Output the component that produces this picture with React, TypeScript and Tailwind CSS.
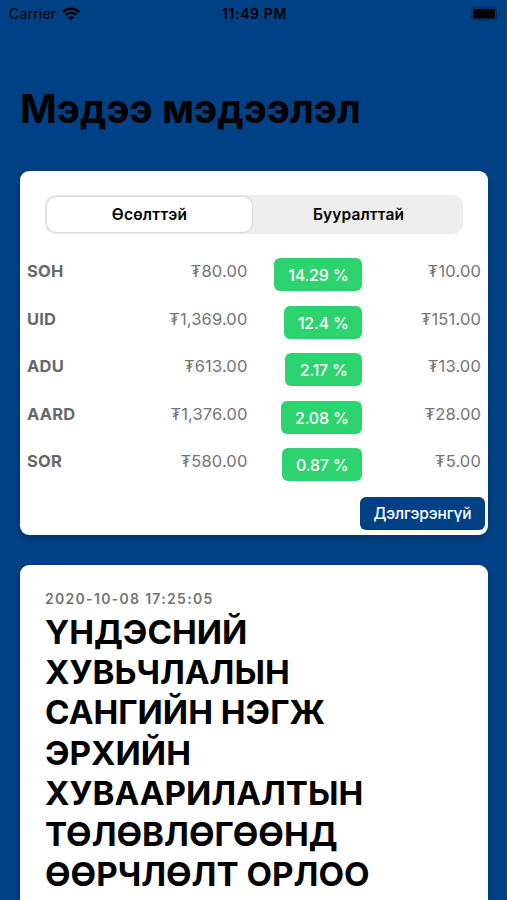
import React from 'react'

const stocks = [
  { symbol: 'SOH', price: '₮80.00', percent: '14.29 %', change: '₮10.00', width: 'w-[88px]' },
  { symbol: 'UID', price: '₮1,369.00', percent: '12.4 %', change: '₮151.00', width: 'w-[78px]' },
  { symbol: 'ADU', price: '₮613.00', percent: '2.17 %', change: '₮13.00', width: 'w-[77px]' },
  { symbol: 'AARD', price: '₮1,376.00', percent: '2.08 %', change: '₮28.00', width: 'w-[81px]' },
  { symbol: 'SOR', price: '₮580.00', percent: '0.87 %', change: '₮5.00', width: 'w-[80px]' },
]

const headline = [
  'ҮНДЭСНИЙ',
  'ХУВЬЧЛАЛЫН',
  'САНГИЙН НЭГЖ',
  'ЭРХИЙН',
  'ХУВААРИЛАЛТЫН',
  'ТӨЛӨВЛӨГӨӨНД',
  'ӨӨРЧЛӨЛТ ОРЛОО',
]

function WifiIcon() {
  return (
    <svg width="18" height="14" viewBox="0 0 18 14" fill="none" stroke="black">
      <path d="M1 5.1 C5.4 .7 12.6 .7 17 5.1" strokeWidth="2.5" />
      <path d="M3.7 8 C6.7 5.1 11.3 5.1 14.3 8" strokeWidth="2.3" />
      <path d="M9 13.5 L6 10.4 C7.6 8.9 10.4 8.9 12 10.4 Z" fill="black" stroke="none" />
    </svg>
  )
}

function BatteryIcon() {
  return (
    <svg width="29" height="14" viewBox="0 0 29 14">
      <rect x=".6" y=".6" width="24.8" height="12.2" rx="3" fill="none" stroke="#003066" strokeWidth="1.2" />
      <rect x="2" y="2" width="22" height="9.4" rx="1.5" fill="black" />
      <path d="M27 4.7 C28.6 5.5 28.6 8 27 8.8 Z" fill="#003066" />
    </svg>
  )
}

function StatusBar() {
  return (
    <div className="flex h-[27px] items-center justify-between pl-[9px] pr-[7px] text-[14px] leading-[27px]">
      <div className="flex w-[140px] items-center gap-[6px]">
        <span className="tracking-[0.2px]">Carrier</span>
        <WifiIcon />
      </div>
      <span className="font-semibold tracking-[0.6px]">11:49 PM</span>
      <div className="flex w-[140px] justify-end">
        <BatteryIcon />
      </div>
    </div>
  )
}

function Tabs() {
  return (
    <div className="ml-[25px] flex h-[39px] w-[418px] rounded-[10px] bg-[#eeeeef] p-[2px] text-[15.5px] font-semibold">
      <button className="w-[205px] rounded-[9px] bg-white tracking-[0.2px] shadow-[0_0_2px_1px_rgba(0,0,0,0.10)]">
        Өсөлттэй
      </button>
      <button className="flex-1 pl-[4px] tracking-[0.1px]">Бууралттай</button>
    </div>
  )
}

function StockRow({ symbol, price, percent, change, width }: (typeof stocks)[number]) {
  return (
    <div className="flex h-[47.6px] items-start pl-[7px] pr-[7px] text-[16.5px] leading-[24px] text-[#747474]">
      <span className="w-[90px] pt-px font-bold tracking-[0.2px] text-[#686868]">{symbol}</span>
      <span className="w-[130.5px] pt-px text-right tracking-[0.15px]">{price}</span>
      <span className="flex w-[114.8px] justify-end">
        <span
          className={`${width} h-[33px] rounded-[6px] bg-[#2dd36f] text-center text-[16px] font-medium leading-[34px] tracking-[-0.2px] text-white`}
        >
          {percent}
        </span>
      </span>
      <span className="flex-1 pt-px text-right tracking-[0.15px]">{change}</span>
    </div>
  )
}

export default function App() {
  return (
    <div className="h-[900px] overflow-hidden bg-[#004185] font-['Inter','Noto_Sans',sans-serif] text-black">
      <StatusBar />
      <h1 className="mt-[57px] pl-[20px] text-[39.5px] font-bold leading-[50px]">Мэдээ мэдээлэл</h1>

      <div className="ml-[20px] mt-[36.5px] h-[364.5px] w-[468px] rounded-[9px] bg-white pt-[24.5px] shadow-[0_3px_8px_rgba(0,0,0,0.2)]">
        <Tabs />
        <div className="mt-[24px]">
          {stocks.map(stock => (
            <StockRow key={stock.symbol} {...stock} />
          ))}
        </div>
        <div className="mt-px flex justify-end pr-[3px]">
          <button className="h-[33.5px] w-[125px] rounded-[6px] bg-[#004185] text-[15.5px] font-medium tracking-[-0.15px] text-white">
            Дэлгэрэнгүй
          </button>
        </div>
      </div>

      <div className="ml-[20px] mt-[29.5px] h-[400px] w-[468px] rounded-[9px] bg-white pl-[25px] pt-[23px] shadow-[0_3px_8px_rgba(0,0,0,0.2)]">
        <p className="text-[14px] font-semibold leading-[22px] tracking-[1.3px] text-[#737373]">2020-10-08 17:25:05</p>
        <h2 className="mt-[2px] text-[33.2px] font-bold leading-[40.4px]">
          {headline.map(line => (
            <span key={line} className="block whitespace-nowrap">
              {line}
            </span>
          ))}
        </h2>
      </div>
    </div>
  )
}
